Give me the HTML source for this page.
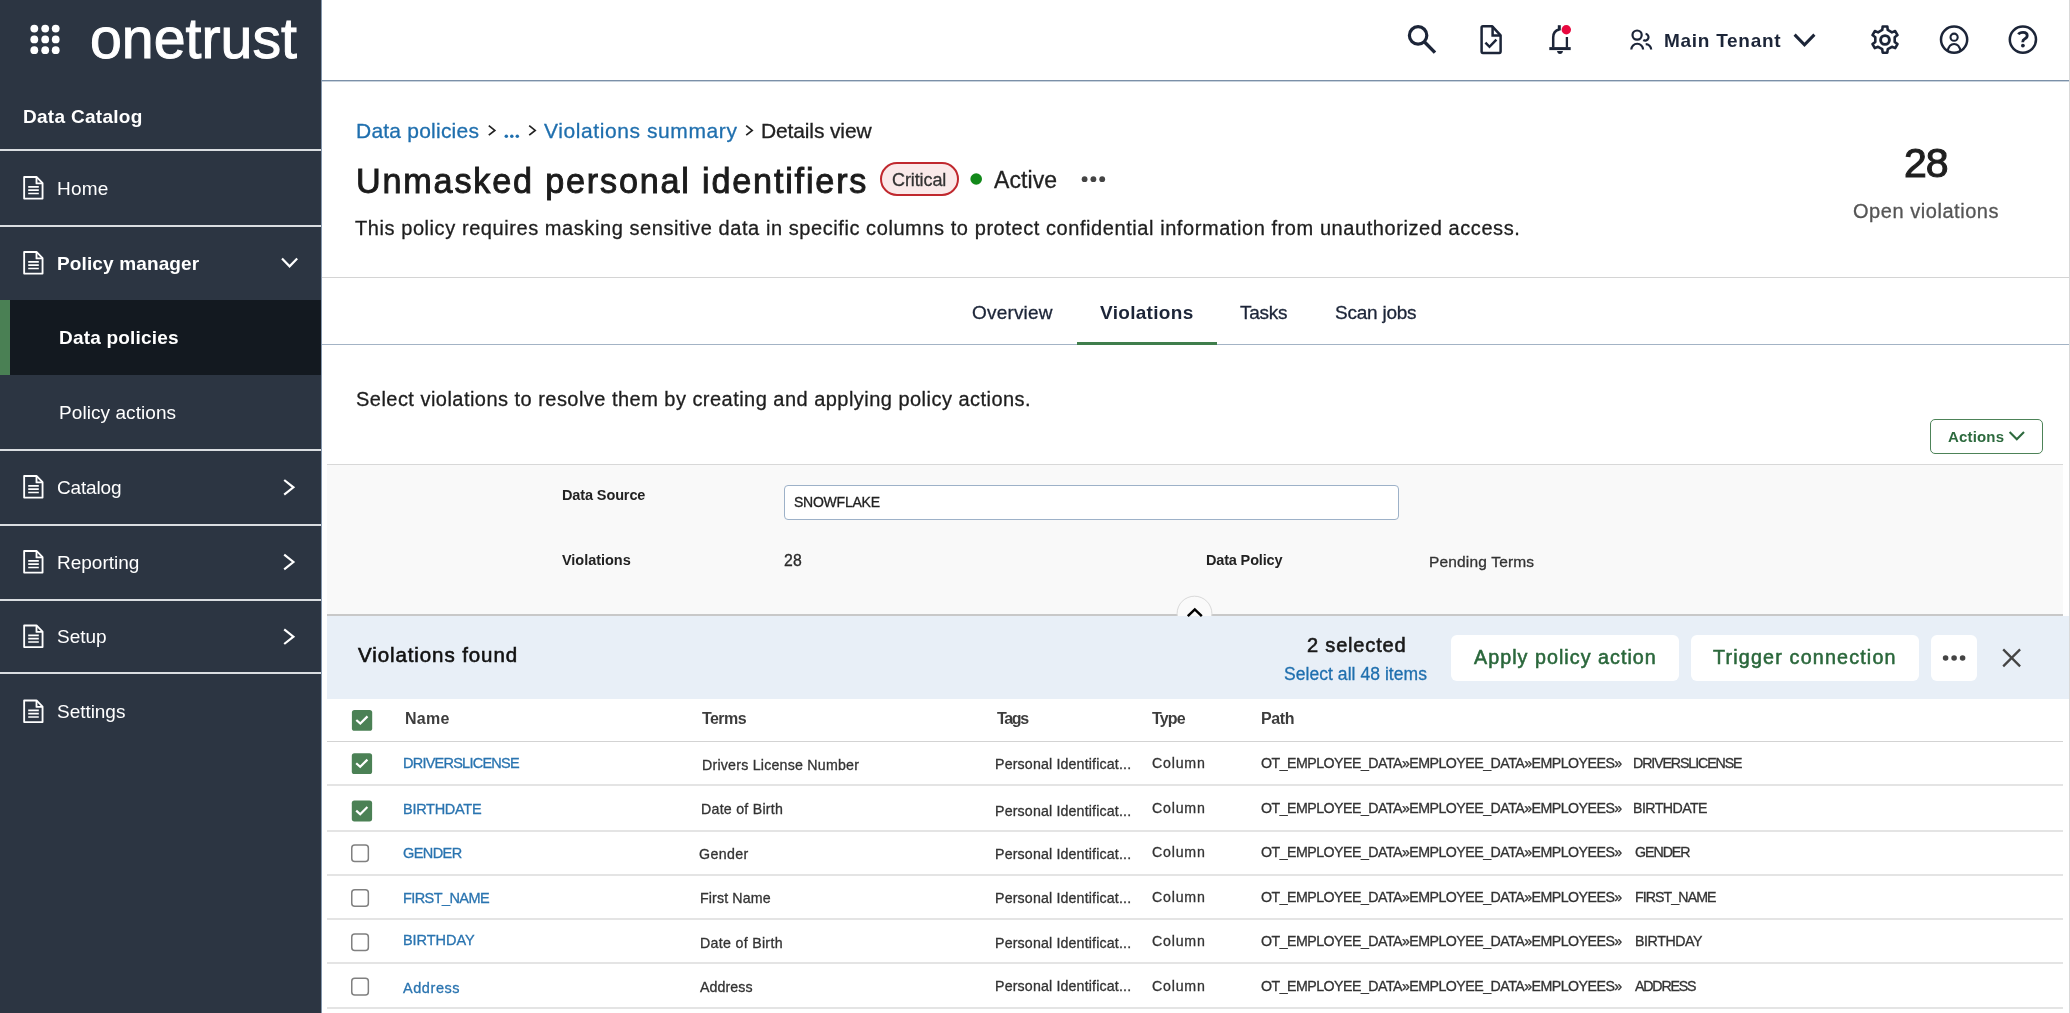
<!DOCTYPE html>
<html><head><meta charset="utf-8"><title>Data policies - Violations</title>
<style>
html,body{margin:0;padding:0;}
body{width:2070px;height:1013px;overflow:hidden;position:relative;background:#fff;font-family:"Liberation Sans",sans-serif;}
.t{position:absolute;white-space:nowrap;line-height:1;will-change:transform;}
.r{position:absolute;}
.s{position:absolute;overflow:visible;}
</style></head><body>
<div class="r" style="left:0px;top:0px;width:321px;height:1013px;background:#2c3542;"></div>
<div class="r" style="left:321px;top:0px;width:1px;height:1013px;background:#8597ac;"></div>
<svg class="s" style="left:0px;top:0px" width="80" height="80" viewBox="0 0 80 80"><circle cx="34.3" cy="28.6" r="3.9" fill="#fff"/><circle cx="34.3" cy="39.4" r="3.9" fill="#fff"/><circle cx="34.3" cy="50.2" r="3.9" fill="#fff"/><circle cx="45.2" cy="28.6" r="3.9" fill="#fff"/><circle cx="45.2" cy="39.4" r="3.9" fill="#fff"/><circle cx="45.2" cy="50.2" r="3.9" fill="#fff"/><circle cx="55.7" cy="28.6" r="3.9" fill="#fff"/><circle cx="55.7" cy="39.4" r="3.9" fill="#fff"/><circle cx="55.7" cy="50.2" r="3.9" fill="#fff"/></svg>
<div class="t" style="left:90.10px;top:9.59px;font-size:57.3px;color:#fff;-webkit-text-stroke:1px #fff;">onetrust</div>
<div class="t" style="left:22.50px;top:106.95px;font-size:19px;color:#fff;font-weight:bold;letter-spacing:0.288px;">Data Catalog</div>
<div class="r" style="left:0px;top:149px;width:321px;height:2px;background:#dadde1;"></div>
<div class="r" style="left:0px;top:225px;width:321px;height:2px;background:#dadde1;"></div>
<div class="r" style="left:0px;top:449px;width:321px;height:2px;background:#dadde1;"></div>
<div class="r" style="left:0px;top:524px;width:321px;height:2px;background:#dadde1;"></div>
<div class="r" style="left:0px;top:599px;width:321px;height:2px;background:#dadde1;"></div>
<div class="r" style="left:0px;top:672px;width:321px;height:2px;background:#dadde1;"></div>
<div class="r" style="left:0px;top:300px;width:321px;height:75px;background:#131920;"></div>
<div class="r" style="left:0px;top:300px;width:10px;height:75px;background:#4a8054;"></div>
<div class="t" style="left:57.10px;top:178.85px;font-size:19px;color:#fff;letter-spacing:0.206px;">Home</div>
<div class="t" style="left:56.80px;top:253.85px;font-size:19px;color:#fff;font-weight:bold;letter-spacing:0.134px;">Policy manager</div>
<div class="t" style="left:56.80px;top:477.85px;font-size:19px;color:#fff;letter-spacing:-0.148px;">Catalog</div>
<div class="t" style="left:56.80px;top:552.85px;font-size:19px;color:#fff;">Reporting</div>
<div class="t" style="left:56.80px;top:627.35px;font-size:19px;color:#fff;">Setup</div>
<div class="t" style="left:56.50px;top:702.15px;font-size:19px;color:#fff;letter-spacing:-0.036px;">Settings</div>
<div class="t" style="left:59.40px;top:328.35px;font-size:19px;color:#fff;font-weight:bold;letter-spacing:0.191px;">Data policies</div>
<div class="t" style="left:59.40px;top:403.35px;font-size:19px;color:#fff;letter-spacing:0.072px;">Policy actions</div>
<svg class="s" style="left:0px;top:0px" width="321" height="1013" viewBox="0 0 321 1013"><g transform="translate(23.2,176)" fill="none" stroke="#fff" stroke-width="1.85"><path d="M0.95,0.95 H13.3 L19.35,7.2 V22.6 H0.95 Z" stroke-linejoin="round"/><path d="M13.3,0.95 V7.4 H19.35" stroke-linejoin="round"/><path d="M5,10.9 H15.6 M5,14.2 H15.6 M5,17.5 H15.6" stroke-width="1.7"/></g><g transform="translate(23.2,251)" fill="none" stroke="#fff" stroke-width="1.85"><path d="M0.95,0.95 H13.3 L19.35,7.2 V22.6 H0.95 Z" stroke-linejoin="round"/><path d="M13.3,0.95 V7.4 H19.35" stroke-linejoin="round"/><path d="M5,10.9 H15.6 M5,14.2 H15.6 M5,17.5 H15.6" stroke-width="1.7"/></g><g transform="translate(23.2,475)" fill="none" stroke="#fff" stroke-width="1.85"><path d="M0.95,0.95 H13.3 L19.35,7.2 V22.6 H0.95 Z" stroke-linejoin="round"/><path d="M13.3,0.95 V7.4 H19.35" stroke-linejoin="round"/><path d="M5,10.9 H15.6 M5,14.2 H15.6 M5,17.5 H15.6" stroke-width="1.7"/></g><g transform="translate(23.2,550)" fill="none" stroke="#fff" stroke-width="1.85"><path d="M0.95,0.95 H13.3 L19.35,7.2 V22.6 H0.95 Z" stroke-linejoin="round"/><path d="M13.3,0.95 V7.4 H19.35" stroke-linejoin="round"/><path d="M5,10.9 H15.6 M5,14.2 H15.6 M5,17.5 H15.6" stroke-width="1.7"/></g><g transform="translate(23.2,624.5)" fill="none" stroke="#fff" stroke-width="1.85"><path d="M0.95,0.95 H13.3 L19.35,7.2 V22.6 H0.95 Z" stroke-linejoin="round"/><path d="M13.3,0.95 V7.4 H19.35" stroke-linejoin="round"/><path d="M5,10.9 H15.6 M5,14.2 H15.6 M5,17.5 H15.6" stroke-width="1.7"/></g><g transform="translate(23.2,699.5)" fill="none" stroke="#fff" stroke-width="1.85"><path d="M0.95,0.95 H13.3 L19.35,7.2 V22.6 H0.95 Z" stroke-linejoin="round"/><path d="M13.3,0.95 V7.4 H19.35" stroke-linejoin="round"/><path d="M5,10.9 H15.6 M5,14.2 H15.6 M5,17.5 H15.6" stroke-width="1.7"/></g><polyline points="282,258.5 289.6,266.3 297.2,258.5" fill="none" stroke="#fff" stroke-width="2.2"/><polyline points="284.2,480.0 293.4,487.3 284.2,494.6" fill="none" stroke="#fff" stroke-width="2.2"/><polyline points="284.2,554.7 293.4,562.0 284.2,569.3" fill="none" stroke="#fff" stroke-width="2.2"/><polyline points="284.2,629.4 293.4,636.7 284.2,644.0" fill="none" stroke="#fff" stroke-width="2.2"/></svg>
<div class="r" style="left:322px;top:80px;width:1748px;height:1px;background:#7b90a8;"></div>
<div class="r" style="left:322px;top:81px;width:1748px;height:1px;background:#c9d3dd;"></div>
<div class="r" style="left:2069px;top:0px;width:1px;height:1013px;background:#d9d9d9;"></div>
<svg class="s" style="left:1380px;top:0px" width="690" height="80" viewBox="1380 0 690 80"><circle cx="1418.1" cy="35.4" r="8.7" fill="none" stroke="#1c2538" stroke-width="3.2"/><line x1="1424.3" y1="41.8" x2="1435" y2="52.6" stroke="#1c2538" stroke-width="3.4"/><path d="M1481.6,27.6 Q1481.6,26.3 1482.9,26.3 H1492.3 L1500.6,35.3 V51.6 Q1500.6,52.9 1499.3,52.9 H1482.9 Q1481.6,52.9 1481.6,51.6 Z" fill="none" stroke="#1c2538" stroke-width="2.5" stroke-linejoin="round"/><path d="M1492.6,26.3 V35.6 H1500.6" fill="none" stroke="#1c2538" stroke-width="2.5"/><polyline points="1485.4,42.6 1489.5,46.8 1496.4,39.6" fill="none" stroke="#1c2538" stroke-width="2.5"/><path d="M1553.2,47.5 V37.5 Q1553.2,30.8 1559.4,29.6" fill="none" stroke="#1c2538" stroke-width="2.5"/><line x1="1559.3" y1="25.2" x2="1559.3" y2="30.4" stroke="#1c2538" stroke-width="3"/><line x1="1566.9" y1="37" x2="1566.9" y2="47.5" stroke="#1c2538" stroke-width="2.3"/><line x1="1549.3" y1="48.6" x2="1570.7" y2="48.6" stroke="#1c2538" stroke-width="3"/><path d="M1557,51 H1563 Q1562.5,54 1560,54 Q1557.5,54 1557,51 Z" fill="#1c2538"/><circle cx="1566.3" cy="29.7" r="4.7" fill="#e8083f"/><circle cx="1637.1" cy="35.1" r="4.6" fill="none" stroke="#1c2538" stroke-width="2.2"/><path d="M1631.3,49.6 A5.9,5.9 0 0 1 1643.1,49.6" fill="none" stroke="#1c2538" stroke-width="2.2"/><path d="M1645.6,33.9 A3.35,3.35 0 1 1 1643.3,40.0" fill="none" stroke="#1c2538" stroke-width="2.2"/><path d="M1645.7,44.2 A5.5,5.5 0 0 1 1651.2,49.6" fill="none" stroke="#1c2538" stroke-width="2.2"/><polyline points="1794.6,34.6 1804.5,44.8 1814.4,34.6" fill="none" stroke="#1c2538" stroke-width="3"/><path d="M1882.24,29.99 L1882.69,26.50 L1887.31,26.50 L1887.76,29.99 L1891.95,32.41 L1895.19,31.05 L1897.50,35.05 L1894.70,37.18 L1894.70,42.02 L1897.50,44.15 L1895.19,48.15 L1891.95,46.79 L1887.76,49.21 L1887.31,52.70 L1882.69,52.70 L1882.24,49.21 L1878.05,46.79 L1874.81,48.15 L1872.50,44.15 L1875.30,42.02 L1875.30,37.18 L1872.50,35.05 L1874.81,31.05 L1878.05,32.41 Z" fill="none" stroke="#1c2538" stroke-width="2.6" stroke-linejoin="round"/><circle cx="1885" cy="40" r="4.4" fill="none" stroke="#1c2538" stroke-width="2.9"/><circle cx="1954.1" cy="39.6" r="13.1" fill="none" stroke="#1c2538" stroke-width="2.5"/><circle cx="1954.1" cy="37.2" r="3.6" fill="none" stroke="#1c2538" stroke-width="2.1"/><path d="M1947.6,51.3 Q1949,44.0 1954.1,44.0 Q1959.2,44.0 1960.6,51.3" fill="none" stroke="#1c2538" stroke-width="2.2"/><circle cx="2022.9" cy="39.6" r="13.1" fill="none" stroke="#1c2538" stroke-width="2.5"/><path d="M2018.4,34.4 Q2019.6,32.4 2023.1,32.4 Q2027.2,32.4 2027.2,35.5 Q2027.2,37.6 2024.6,38.9 Q2022.7,39.9 2022.7,42.3" fill="none" stroke="#1c2538" stroke-width="2.8"/><circle cx="2022.9" cy="45.6" r="1.9" fill="#1c2538"/></svg>
<div class="t" style="left:1664.10px;top:30.75px;font-size:19px;color:#1c2538;font-weight:bold;letter-spacing:0.717px;">Main Tenant</div>
<div class="t" style="left:356.20px;top:119.85px;font-size:21px;color:#1f6fae;-webkit-text-stroke:0.3px #1f6fae;letter-spacing:0.223px;">Data policies</div>
<div class="t" style="left:543.70px;top:119.85px;font-size:21px;color:#1f6fae;-webkit-text-stroke:0.3px #1f6fae;letter-spacing:0.591px;">Violations summary</div>
<div class="t" style="left:761.20px;top:119.85px;font-size:21px;color:#222;-webkit-text-stroke:0.3px #222;letter-spacing:-0.130px;">Details view</div>
<svg class="s" style="left:480px;top:110px" width="300" height="40" viewBox="480 110 300 40"><polyline points="488.8,125.6 494.8,130.4 488.8,135.2" fill="none" stroke="#222" stroke-width="1.7"/><polyline points="529.2,125.6 535.2,130.4 529.2,135.2" fill="none" stroke="#222" stroke-width="1.7"/><polyline points="746.2,125.6 752.2,130.4 746.2,135.2" fill="none" stroke="#222" stroke-width="1.7"/><circle cx="506.3" cy="136.3" r="1.75" fill="#1f6fae"/><circle cx="511.8" cy="136.3" r="1.75" fill="#1f6fae"/><circle cx="517.3" cy="136.3" r="1.75" fill="#1f6fae"/></svg>
<div class="t" style="left:356.20px;top:163.73px;font-size:34.2px;color:#1b1b1b;-webkit-text-stroke:0.9px #1b1b1b;letter-spacing:1.806px;">Unmasked personal identifiers</div>
<div class="r" style="left:880px;top:162px;width:79px;height:34px;background:#fae9e9;border:2px solid #c0282e;border-radius:17px;box-sizing:border-box;"></div>
<div class="t" style="left:891.70px;top:171.30px;font-size:18px;color:#333;-webkit-text-stroke:0.3px #333;letter-spacing:-0.100px;">Critical</div>
<svg class="s" style="left:960px;top:160px" width="160" height="40" viewBox="960 160 160 40"><circle cx="976.2" cy="179" r="5.8" fill="#12891a"/><circle cx="1084.6" cy="179.2" r="2.9" fill="#444"/><circle cx="1093.4" cy="179.2" r="2.9" fill="#444"/><circle cx="1102.2" cy="179.2" r="2.9" fill="#444"/></svg>
<div class="t" style="left:993.70px;top:168.75px;font-size:23px;color:#222;-webkit-text-stroke:0.3px #222;letter-spacing:0.074px;">Active</div>
<div class="t" style="left:355.20px;top:218.40px;font-size:20px;color:#1e1e1e;-webkit-text-stroke:0.3px #1e1e1e;letter-spacing:0.572px;">This policy requires masking sensitive data in specific columns to protect confidential information from unauthorized access.</div>
<div class="t" style="left:1903.90px;top:143.25px;font-size:41px;color:#1f1f1f;-webkit-text-stroke:1.1px #1f1f1f;letter-spacing:-1.005px;">28</div>
<div class="t" style="left:1853.00px;top:201.00px;font-size:20px;color:#555;-webkit-text-stroke:0.3px #555;letter-spacing:0.545px;">Open violations</div>
<div class="r" style="left:322px;top:277px;width:1747px;height:1px;background:#d4d4d4;"></div>
<div class="r" style="left:322px;top:344px;width:1747px;height:1px;background:#a3b3c5;"></div>
<div class="r" style="left:1077px;top:342px;width:140px;height:3px;background:#3f7e4c;"></div>
<div class="t" style="left:972.40px;top:302.75px;font-size:19px;color:#1c2538;-webkit-text-stroke:0.3px #1c2538;letter-spacing:0.188px;">Overview</div>
<div class="t" style="left:1100.00px;top:302.75px;font-size:19px;color:#1c2538;font-weight:bold;letter-spacing:0.306px;">Violations</div>
<div class="t" style="left:1239.60px;top:302.75px;font-size:19px;color:#1c2538;-webkit-text-stroke:0.3px #1c2538;letter-spacing:-0.242px;">Tasks</div>
<div class="t" style="left:1334.80px;top:302.75px;font-size:19px;color:#1c2538;-webkit-text-stroke:0.3px #1c2538;letter-spacing:-0.230px;">Scan jobs</div>
<div class="t" style="left:355.90px;top:389.40px;font-size:20px;color:#1e1e1e;-webkit-text-stroke:0.3px #1e1e1e;letter-spacing:0.469px;">Select violations to resolve them by creating and applying policy actions.</div>
<div class="r" style="left:1930px;top:419px;width:113px;height:35px;background:#fff;border:1.5px solid #4d8358;border-radius:5px;box-sizing:border-box;"></div>
<div class="t" style="left:1948.40px;top:429.15px;font-size:15px;color:#2d6a3e;font-weight:bold;letter-spacing:0.166px;">Actions</div>
<svg class="s" style="left:2000px;top:420px" width="40" height="30" viewBox="2000 420 40 30"><polyline points="2009.6,432 2016.8,439.2 2024,432" fill="none" stroke="#2d6a3e" stroke-width="2.1"/></svg>
<div class="r" style="left:327px;top:464px;width:1736px;height:152px;background:#f9f9f9;"></div>
<div class="r" style="left:327px;top:464px;width:1736px;height:1px;background:#d8d8d8;"></div>
<div class="r" style="left:327px;top:614px;width:1736px;height:2px;background:#c8c8c8;"></div>
<div class="t" style="left:561.60px;top:488.38px;font-size:14.5px;color:#222;font-weight:bold;letter-spacing:-0.121px;">Data Source</div>
<div class="r" style="left:784px;top:485px;width:614.5px;height:34.5px;background:#fff;border:1px solid #9db1c8;border-radius:4px;box-sizing:border-box;"></div>
<div class="t" style="left:793.70px;top:495.20px;font-size:14px;color:#222;-webkit-text-stroke:0.3px #222;letter-spacing:-0.238px;">SNOWFLAKE</div>
<div class="t" style="left:561.60px;top:553.17px;font-size:14.5px;color:#222;font-weight:bold;letter-spacing:-0.036px;">Violations</div>
<div class="t" style="left:784.10px;top:552.87px;font-size:15.8px;color:#2a2a2a;-webkit-text-stroke:0.3px #2a2a2a;letter-spacing:0.200px;">28</div>
<div class="t" style="left:1206.40px;top:553.47px;font-size:14.5px;color:#222;font-weight:bold;letter-spacing:-0.167px;">Data Policy</div>
<div class="t" style="left:1428.90px;top:553.83px;font-size:15.5px;color:#333;-webkit-text-stroke:0.3px #333;letter-spacing:0.166px;">Pending Terms</div>
<div class="r" style="left:327px;top:616px;width:1742px;height:83px;background:#e8eff7;"></div>
<svg class="s" style="left:1170px;top:590px" width="50" height="40" viewBox="1170 590 50 40"><circle cx="1194.5" cy="613.6" r="17.4" fill="#fafafa" stroke="#d9d9d9" stroke-width="1"/><rect x="1170" y="616" width="50" height="20" fill="#e8eff7"/><polyline points="1187.8,616.2 1194.8,609.4 1201.8,616.2" fill="none" stroke="#000" stroke-width="2.5"/></svg>
<div class="t" style="left:358.20px;top:644.78px;font-size:20.5px;color:#111;-webkit-text-stroke:0.6px #111;letter-spacing:0.906px;">Violations found</div>
<div class="t" style="left:1306.80px;top:635.00px;font-size:20px;color:#1a1a1a;-webkit-text-stroke:0.6px #1a1a1a;letter-spacing:0.825px;">2 selected</div>
<div class="t" style="left:1283.90px;top:665.83px;font-size:17.5px;color:#1f6fae;-webkit-text-stroke:0.3px #1f6fae;letter-spacing:0.050px;">Select all 48 items</div>
<div class="r" style="left:1451px;top:635px;width:228px;height:46px;background:#fff;border-radius:6px;"></div>
<div class="t" style="left:1474.00px;top:648.15px;font-size:19.7px;color:#2a673b;-webkit-text-stroke:0.55px #2a673b;letter-spacing:1.041px;">Apply policy action</div>
<div class="r" style="left:1691px;top:635px;width:228px;height:46px;background:#fff;border-radius:6px;"></div>
<div class="t" style="left:1713.30px;top:648.25px;font-size:19.7px;color:#2a673b;-webkit-text-stroke:0.55px #2a673b;letter-spacing:1.187px;">Trigger connection</div>
<div class="r" style="left:1931px;top:635px;width:46px;height:46px;background:#fff;border-radius:6px;"></div>
<svg class="s" style="left:1930px;top:630px" width="110" height="50" viewBox="1930 630 110 50"><circle cx="1945.6" cy="658" r="2.8" fill="#444"/><circle cx="1954.1" cy="658" r="2.8" fill="#444"/><circle cx="1962.6" cy="658" r="2.8" fill="#444"/><path d="M2003.2,649.4 L2020.1,666.4 M2020.1,649.4 L2003.2,666.4" stroke="#444" stroke-width="2.3"/></svg>
<div class="t" style="left:405.10px;top:710.60px;font-size:16px;color:#3d3d3d;font-weight:bold;letter-spacing:0.241px;">Name</div>
<div class="t" style="left:701.60px;top:710.60px;font-size:16px;color:#3d3d3d;font-weight:bold;letter-spacing:-0.559px;">Terms</div>
<div class="t" style="left:997.40px;top:710.60px;font-size:16px;color:#3d3d3d;font-weight:bold;letter-spacing:-1.352px;">Tags</div>
<div class="t" style="left:1152.40px;top:710.60px;font-size:16px;color:#3d3d3d;font-weight:bold;letter-spacing:-0.819px;">Type</div>
<div class="t" style="left:1260.70px;top:710.60px;font-size:16px;color:#3d3d3d;font-weight:bold;letter-spacing:-0.357px;">Path</div>
<div class="r" style="left:327px;top:741px;width:1736px;height:1px;background:#d3d3d3;"></div>
<div class="r" style="left:327px;top:784px;width:1736px;height:2px;background:#e4e4e4;"></div>
<div class="r" style="left:327px;top:830px;width:1736px;height:2px;background:#e4e4e4;"></div>
<div class="r" style="left:327px;top:874px;width:1736px;height:2px;background:#e4e4e4;"></div>
<div class="r" style="left:327px;top:918px;width:1736px;height:2px;background:#e4e4e4;"></div>
<div class="r" style="left:327px;top:962px;width:1736px;height:2px;background:#e4e4e4;"></div>
<div class="r" style="left:327px;top:1007px;width:1736px;height:2px;background:#e4e4e4;"></div>
<svg class="s" style="left:340px;top:700px" width="50" height="310" viewBox="340 700 50 310"><rect x="351.9" y="710" width="20.3" height="20.8" rx="2.6" fill="#4b8155"/><polyline points="356.29999999999995,720.0 360.29999999999995,723.6 367.5,716.4" fill="none" stroke="#fff" stroke-width="2.2"/><rect x="351.8" y="753.2" width="20.3" height="20.8" rx="2.6" fill="#4b8155"/><polyline points="356.2,763.2 360.2,766.8000000000001 367.40000000000003,759.6" fill="none" stroke="#fff" stroke-width="2.2"/><rect x="351.8" y="800.6" width="20.3" height="20.8" rx="2.6" fill="#4b8155"/><polyline points="356.2,810.6 360.2,814.2 367.40000000000003,807.0" fill="none" stroke="#fff" stroke-width="2.2"/><rect x="351.75" y="844.95" width="16.6" height="16.6" rx="3" fill="#fff" stroke="#808080" stroke-width="1.5"/><rect x="351.75" y="889.75" width="16.6" height="16.6" rx="3" fill="#fff" stroke="#808080" stroke-width="1.5"/><rect x="351.75" y="933.95" width="16.6" height="16.6" rx="3" fill="#fff" stroke="#808080" stroke-width="1.5"/><rect x="351.75" y="978.35" width="16.6" height="16.6" rx="3" fill="#fff" stroke="#808080" stroke-width="1.5"/></svg>
<div class="t" style="left:403.00px;top:756.38px;font-size:14.5px;color:#2a74b0;-webkit-text-stroke:0.3px #2a74b0;letter-spacing:-0.762px;">DRIVERSLICENSE</div>
<div class="t" style="left:702.20px;top:757.53px;font-size:14.2px;color:#333;-webkit-text-stroke:0.3px #333;letter-spacing:0.224px;">Drivers License Number</div>
<div class="t" style="left:995.40px;top:757.13px;font-size:14.2px;color:#333;-webkit-text-stroke:0.3px #333;letter-spacing:0.163px;">Personal Identificat...</div>
<div class="t" style="left:1152.40px;top:756.33px;font-size:14.2px;color:#333;-webkit-text-stroke:0.3px #333;letter-spacing:0.794px;">Column</div>
<div class="t" style="left:1260.50px;top:756.33px;font-size:14.2px;color:#333;-webkit-text-stroke:0.3px #333;letter-spacing:-0.522px;">OT_EMPLOYEE_DATA»EMPLOYEE_DATA»EMPLOYEES»</div>
<div class="t" style="left:1633.20px;top:756.33px;font-size:14.2px;color:#333;-webkit-text-stroke:0.3px #333;letter-spacing:-1.099px;">DRIVERSLICENSE</div>
<div class="t" style="left:403.00px;top:801.97px;font-size:14.5px;color:#2a74b0;-webkit-text-stroke:0.3px #2a74b0;letter-spacing:-0.279px;">BIRTHDATE</div>
<div class="t" style="left:701.00px;top:801.53px;font-size:14.2px;color:#333;-webkit-text-stroke:0.3px #333;letter-spacing:0.256px;">Date of Birth</div>
<div class="t" style="left:995.40px;top:804.43px;font-size:14.2px;color:#333;-webkit-text-stroke:0.3px #333;letter-spacing:0.163px;">Personal Identificat...</div>
<div class="t" style="left:1152.40px;top:800.83px;font-size:14.2px;color:#333;-webkit-text-stroke:0.3px #333;letter-spacing:0.794px;">Column</div>
<div class="t" style="left:1260.50px;top:800.83px;font-size:14.2px;color:#333;-webkit-text-stroke:0.3px #333;letter-spacing:-0.522px;">OT_EMPLOYEE_DATA»EMPLOYEE_DATA»EMPLOYEES»</div>
<div class="t" style="left:1633.20px;top:800.83px;font-size:14.2px;color:#333;-webkit-text-stroke:0.3px #333;letter-spacing:-0.570px;">BIRTHDATE</div>
<div class="t" style="left:403.00px;top:845.77px;font-size:14.5px;color:#2a74b0;-webkit-text-stroke:0.3px #2a74b0;letter-spacing:-0.587px;">GENDER</div>
<div class="t" style="left:698.80px;top:847.13px;font-size:14.2px;color:#333;-webkit-text-stroke:0.3px #333;letter-spacing:0.367px;">Gender</div>
<div class="t" style="left:995.40px;top:846.83px;font-size:14.2px;color:#333;-webkit-text-stroke:0.3px #333;letter-spacing:0.163px;">Personal Identificat...</div>
<div class="t" style="left:1152.40px;top:845.23px;font-size:14.2px;color:#333;-webkit-text-stroke:0.3px #333;letter-spacing:0.794px;">Column</div>
<div class="t" style="left:1260.50px;top:845.23px;font-size:14.2px;color:#333;-webkit-text-stroke:0.3px #333;letter-spacing:-0.522px;">OT_EMPLOYEE_DATA»EMPLOYEE_DATA»EMPLOYEES»</div>
<div class="t" style="left:1634.60px;top:845.23px;font-size:14.2px;color:#333;-webkit-text-stroke:0.3px #333;letter-spacing:-1.030px;">GENDER</div>
<div class="t" style="left:403.00px;top:891.47px;font-size:14.5px;color:#2a74b0;-webkit-text-stroke:0.3px #2a74b0;letter-spacing:-0.582px;">FIRST_NAME</div>
<div class="t" style="left:700.40px;top:891.43px;font-size:14.2px;color:#333;-webkit-text-stroke:0.3px #333;letter-spacing:0.130px;">First Name</div>
<div class="t" style="left:995.40px;top:891.23px;font-size:14.2px;color:#333;-webkit-text-stroke:0.3px #333;letter-spacing:0.163px;">Personal Identificat...</div>
<div class="t" style="left:1152.40px;top:889.73px;font-size:14.2px;color:#333;-webkit-text-stroke:0.3px #333;letter-spacing:0.794px;">Column</div>
<div class="t" style="left:1260.50px;top:889.73px;font-size:14.2px;color:#333;-webkit-text-stroke:0.3px #333;letter-spacing:-0.522px;">OT_EMPLOYEE_DATA»EMPLOYEE_DATA»EMPLOYEES»</div>
<div class="t" style="left:1634.60px;top:889.73px;font-size:14.2px;color:#333;-webkit-text-stroke:0.3px #333;letter-spacing:-0.927px;">FIRST_NAME</div>
<div class="t" style="left:403.00px;top:933.38px;font-size:14.5px;color:#2a74b0;-webkit-text-stroke:0.3px #2a74b0;letter-spacing:-0.054px;">BIRTHDAY</div>
<div class="t" style="left:700.40px;top:935.83px;font-size:14.2px;color:#333;-webkit-text-stroke:0.3px #333;letter-spacing:0.306px;">Date of Birth</div>
<div class="t" style="left:995.40px;top:936.13px;font-size:14.2px;color:#333;-webkit-text-stroke:0.3px #333;letter-spacing:0.163px;">Personal Identificat...</div>
<div class="t" style="left:1152.40px;top:934.13px;font-size:14.2px;color:#333;-webkit-text-stroke:0.3px #333;letter-spacing:0.794px;">Column</div>
<div class="t" style="left:1260.50px;top:934.13px;font-size:14.2px;color:#333;-webkit-text-stroke:0.3px #333;letter-spacing:-0.522px;">OT_EMPLOYEE_DATA»EMPLOYEE_DATA»EMPLOYEES»</div>
<div class="t" style="left:1634.60px;top:934.13px;font-size:14.2px;color:#333;-webkit-text-stroke:0.3px #333;letter-spacing:-0.412px;">BIRTHDAY</div>
<div class="t" style="left:403.00px;top:980.67px;font-size:14.5px;color:#2a74b0;-webkit-text-stroke:0.3px #2a74b0;letter-spacing:0.568px;">Address</div>
<div class="t" style="left:700.40px;top:980.13px;font-size:14.2px;color:#333;-webkit-text-stroke:0.3px #333;letter-spacing:0.085px;">Address</div>
<div class="t" style="left:995.40px;top:979.33px;font-size:14.2px;color:#333;-webkit-text-stroke:0.3px #333;letter-spacing:0.163px;">Personal Identificat...</div>
<div class="t" style="left:1152.40px;top:978.63px;font-size:14.2px;color:#333;-webkit-text-stroke:0.3px #333;letter-spacing:0.794px;">Column</div>
<div class="t" style="left:1260.50px;top:978.63px;font-size:14.2px;color:#333;-webkit-text-stroke:0.3px #333;letter-spacing:-0.522px;">OT_EMPLOYEE_DATA»EMPLOYEE_DATA»EMPLOYEES»</div>
<div class="t" style="left:1634.60px;top:978.63px;font-size:14.2px;color:#333;-webkit-text-stroke:0.3px #333;letter-spacing:-1.175px;">ADDRESS</div>
</body></html>
